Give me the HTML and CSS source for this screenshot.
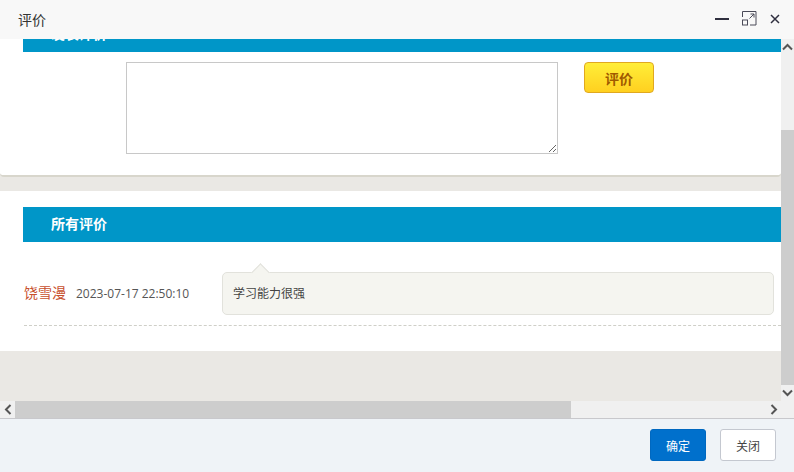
FILE: index.html
```html
<!DOCTYPE html>
<html lang="zh-CN">
<head>
<meta charset="utf-8">
<title>评价</title>
<link rel="stylesheet" href="styles.css">
</head>
<body>
<div class="dialog">
  <header class="titlebar">
    <span class="title">评价</span>
    <div class="win-icons">
      <svg class="ico" width="14" height="14" viewBox="0 0 14 14"><path d="M0 7h14" stroke="#2f2f3f" stroke-width="2" fill="none"/></svg>
      <svg class="ico" width="15" height="15" viewBox="0 0 15 15"><path d="M.5 6V.5h13.5V14H8M7.5 7.500 12 3M8.500 3H12V6.500" stroke="#4a4a58" fill="none"/><rect x=".5" y="9" width="5" height="5" stroke="#4a4a58" fill="none"/></svg>
      <svg class="ico" width="10" height="10" viewBox="0 0 10 10"><path d="M1 1l8 8M9 1L1 9" stroke="#2f2f3f" stroke-width="1.500" fill="none"/></svg>
    </div>
  </header>
  <div class="frame">
    <div class="viewport">
      <div class="scrolled">
        <section class="card top-card">
          <h2 class="bar">发表评价</h2>
          <div class="form-row">
            <textarea class="input"></textarea>
            <button class="submit">评价</button>
          </div>
        </section>
        <section class="card list-card">
          <h2 class="bar">所有评价</h2>
          <div class="comment">
            <span class="name">饶雪漫</span>
            <span class="date">2023-07-17 22:50:10</span>
            <div class="bubble">学习能力很强</div>
          </div>
        </section>
      </div>
    </div>
    <div class="vscroll">
      <div class="arrow"><svg width="11" height="8" viewBox="0 0 11 8"><path d="M1 6.500 5.500 2 10 6.500" stroke="#555" stroke-width="2" fill="none"/></svg></div>
      <div class="vtrack"><div class="vthumb"></div></div>
      <div class="arrow"><svg width="11" height="8" viewBox="0 0 11 8"><path d="M1 1.500 5.500 6 10 1.500" stroke="#555" stroke-width="2" fill="none"/></svg></div>
    </div>
    <div class="hscroll">
      <div class="arrow h"><svg width="8" height="11" viewBox="0 0 8 11"><path d="M6.500 1 2 5.500 6.500 10" stroke="#555" stroke-width="2" fill="none"/></svg></div>
      <div class="hthumb"></div>
      <div class="htrack"></div>
      <div class="arrow h"><svg width="8" height="11" viewBox="0 0 8 11"><path d="M1.500 1 6 5.500 1.500 10" stroke="#555" stroke-width="2" fill="none"/></svg></div>
    </div>
    <div class="corner"></div>
  </div>
  <footer class="footer">
    <button class="btn primary">确定</button>
    <button class="btn">关闭</button>
  </footer>
</div>
</body>
</html>
```
FILE: styles.css
```css
* { box-sizing: border-box; }
html, body { margin: 0; height: 100%; }
body { font-family: "Liberation Sans", "Noto Sans CJK SC", sans-serif; overflow: hidden; }
.dialog { width: 794px; height: 472px; display: flex; flex-direction: column; background: #fff; }
.titlebar { height: 39px; flex: none; background: #f8f8f8; display: flex; align-items: center; justify-content: space-between; padding: 0 14px 2px 18px; }
.title { font-size: 14px; color: #333; }
.win-icons { display: flex; align-items: center; gap: 13px; }
.ico { display: block; }
.frame { height: 379px; flex: none; display: grid; grid-template-columns: 781px 13px; grid-template-rows: 362px 17px; }
.viewport { overflow: hidden; background: #eae8e4; }
.scrolled { margin-top: -22px; }
.card { background: #fff; }
.top-card { height: 160px; border-bottom: 2px solid #d8d6cc; border-radius: 0 0 4px 4px; padding-top: 0; }
.bar { margin: 0 0 0 23px; height: 35px; line-height: 35px; padding-left: 28px; background: #0096c8; color: #fff; font-size: 14px; font-weight: 700; }
.top-card .bar { margin-top: 0; }
.form-row { display: flex; align-items: flex-start; padding: 10px 0 0 126px; gap: 26px; }
.input { display: block; width: 432px; height: 92px; border: 1px solid #c8c8c8; background: #fff; margin: 0; padding: 2px; outline: 0; resize: both; }
.submit { width: 70px; height: 31px; border: 1px solid #e0a820; border-radius: 4px; background: linear-gradient(#ffee38, #ffd020); color: #a05a00; font: 700 14px "Noto Sans CJK SC", sans-serif; padding: 0; }
.list-card { margin-top: 14px; height: 160px; padding-top: 16px; }
.comment { margin: 30px 0 0 24px; height: 54px; border-bottom: 1px dashed #cfcfc8; display: flex; align-items: flex-start; }
.name { font-size: 14px; color: #c8502d; line-height: 43px; width: 52px; flex: none; }
.date { font-family: "Open Sans", sans-serif; font-size: 12px; color: #555; line-height: 43px; width: 146px; flex: none; white-space: nowrap; }
.bubble { position: relative; width: 552px; height: 43px; line-height: 43px; padding-left: 10px; background: #f5f5f0; border: 1px solid #e2e2dc; border-radius: 5px; font-size: 12px; color: #444; }
.bubble::before { content: ""; position: absolute; left: 31px; top: -7px; width: 12px; height: 12px; background: #f5f5f0; border: 1px solid #e2e2dc; border-right: 0; border-bottom: 0; transform: rotate(45deg); }
.vscroll { background: #f0f0f0; display: flex; flex-direction: column; height: 362px; }
.arrow { flex: none; height: 16px; display: flex; align-items: center; justify-content: center; background: #f0f0f0; }
.arrow.h { width: 15px; height: 17px; }
.vtrack { flex: 1; padding-top: 75px; }
.vthumb { height: 255px; background: #cdcdcd; }
.hscroll { display: flex; height: 17px; background: #f0f0f0; }
.hthumb { width: 556px; background: #cdcdcd; }
.htrack { flex: 1; }
.corner { background: #f0f0f0; }
.footer { height: 54px; flex: none; background: #eff3f7; border-top: 1px solid #c8c8cc; display: flex; justify-content: flex-end; align-items: flex-start; gap: 14px; padding: 10px 18px 0 0; }
.btn { width: 56px; height: 32px; border: 1px solid #c4c8d0; border-radius: 3px; background: #fff; color: #444; font: 12px "Liberation Sans", "Noto Sans CJK SC", sans-serif; padding: 0; }
.btn.primary { background: #0070cc; border-color: #0068c0; color: #fff; }
```
